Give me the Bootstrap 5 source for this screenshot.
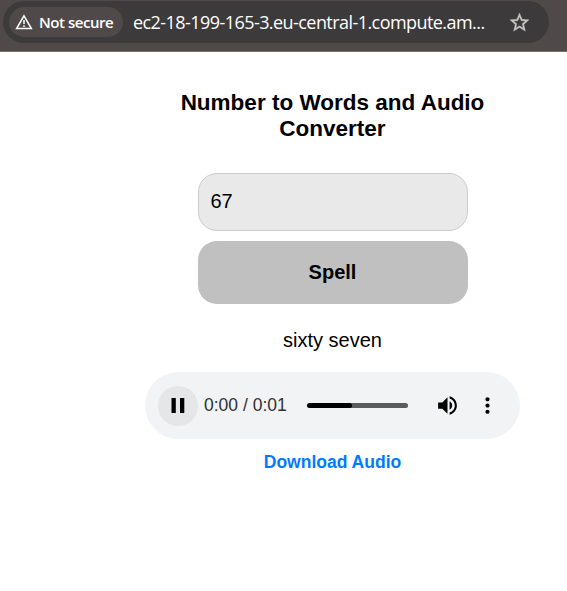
<!DOCTYPE html>
<html lang="en">
<head>
<meta charset="utf-8">
<meta name="viewport" content="width=device-width, initial-scale=1">
<title>Number to Words and Audio Converter</title>
<link href="https://cdn.jsdelivr.net/npm/bootstrap@5.3.0/dist/css/bootstrap.min.css" rel="stylesheet">
<style>
body{font-family:"Liberation Sans",Arial,sans-serif;color:#000;overflow:hidden}
.browser-bar{height:52px;background:#504949;border-bottom:1px solid #777272;padding:1px 18px 0 3px;font-family:"Open Sans","Noto Sans",sans-serif}
.omnibox{height:42px;background:#3c3a3a;padding-left:6px}
.chip{width:114px;height:30px;background:#504949;color:#fff;padding-left:6px;font-size:15px;font-weight:600;letter-spacing:-.45px;line-height:20px}
.chip span{margin-top:-1px}
.chip svg{margin-right:6px}
.url{margin-left:10px;width:367px;color:#fff;font-size:18px;letter-spacing:-.56px;line-height:24px}
.converter{width:375px;margin-left:145px;padding-top:38px}
.title{font-size:22.5px;line-height:26px;font-weight:700;margin:0 0 31px;width:330px}
.number-field{width:270px;height:58px;border:1px solid #ccc;border-radius:19px;background:#e9e9e9;color:#000;font-size:20px;padding:0 12px 2px;margin-bottom:10px}
.spell{width:270px;height:63px;border:0;border-radius:19px;background:#c0c0c0;color:#000;font-size:20px;font-weight:700;padding:0 0 2px}
.spell:hover{background:#c0c0c0;color:#000}
.words{font-size:20px;line-height:24px;margin:24px 0 20px}
.player{height:67px;background:#f1f3f4;padding:0 12px 0 13px}
.pause{width:40px;height:40px;background:#e5e6e7;border:0}
.time{font-size:17.5px;margin-left:6px;width:83px;color:#303132}
.track{width:101px;height:5px;background:#5a5b5b;margin-left:20px}
.track .played{background:#000}
.volume{margin-left:27px}
.more{margin-left:15px}
.download{font-size:17.5px;line-height:22px;font-weight:700;color:#007bff;margin-top:12px}
</style>
</head>
<body class="bg-white">
<header class="browser-bar">
  <div class="omnibox rounded-pill d-flex align-items-center">
    <div class="chip rounded-pill d-flex align-items-center text-nowrap">
      <svg width="18" height="16" viewBox="0 0 18 16" fill="none" stroke="#fff" stroke-width="1.5"><path d="M9 1.8 16.4 14.6H1.6Z"/><path d="M9 6v4.1M9 11.3v1.6"/></svg>
      <span>Not secure</span>
    </div>
    <div class="url text-nowrap"><span>ec2-18-199-165-3.eu-central-1.compute.am...</span></div>
    <svg width="23" height="23" viewBox="0 0 24 24" fill="#c9c6c6" stroke="#c9c6c6" stroke-width=".3" class="ms-2"><path d="m22 9.24-7.19-.62L12 2 9.19 8.63 2 9.24l5.46 4.73L5.82 21 12 17.27 18.18 21l-1.63-7.03L22 9.24zM12 15.4l-3.76 2.27 1-4.28-3.32-2.88 4.38-.38L12 6.1l1.71 4.04 4.38.38-3.32 2.88 1 4.28L12 15.4z"/></svg>
  </div>
</header>
<main class="converter d-flex flex-column align-items-center text-center">
  <h1 class="title">Number to Words and Audio Converter</h1>
  <input class="number-field" type="text" value="67" aria-label="Number">
  <button class="btn spell" type="button">Spell</button>
  <p class="words">sixty seven</p>
  <div class="player rounded-pill d-flex align-items-center w-100">
    <button class="pause rounded-circle p-0 d-flex align-items-center justify-content-center" type="button" aria-label="Pause">
      <svg width="14" height="15" viewBox="0 0 14 15"><path d="M0.5 0h4.3v15H.5zM9 0h4.3v15H9z"/></svg>
    </button>
    <span class="time text-nowrap text-start">0:00 / 0:01</span>
    <div class="track rounded-pill overflow-hidden"><div class="played rounded-pill h-100" style="width:45%"></div></div>
    <svg class="volume" width="25" height="25" viewBox="0 0 24 24"><path d="M3 9v6h4l5 5V4L7 9H3zm13.5 3c0-1.77-1.02-3.29-2.5-4.03v8.05c1.48-.73 2.5-2.25 2.5-4.02zM14 3.23v2.06c2.89.86 5 3.54 5 6.71s-2.11 5.85-5 6.71v2.06c4.01-.91 7-4.49 7-8.77s-2.99-7.86-7-8.77z"/></svg>
    <svg class="more" width="25" height="25" viewBox="0 0 24 24"><path d="M12 8c1.1 0 2-.9 2-2s-.9-2-2-2-2 .9-2 2 .9 2 2 2zm0 2c-1.1 0-2 .9-2 2s.9 2 2 2 2-.9 2-2-.9-2-2-2zm0 6c-1.1 0-2 .9-2 2s.9 2 2 2 2-.9 2-2-.9-2-2-2z"/></svg>
  </div>
  <a class="download text-decoration-none" href="#">Download Audio</a>
</main>
</body>
</html>
